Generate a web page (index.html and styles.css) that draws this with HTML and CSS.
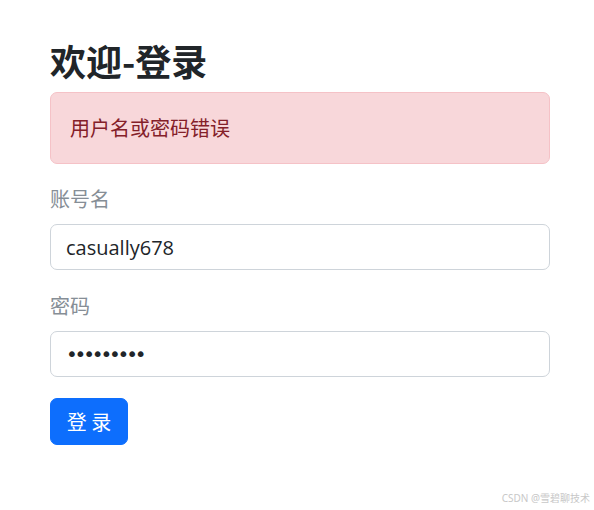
FILE: index.html
```html
<!DOCTYPE html>
<html lang="zh-CN">
<head>
<meta charset="utf-8">
<title>欢迎-登录</title>
<link rel="stylesheet" href="styles.css">
</head>
<body>
<div class="container">
  <h1 class="title">欢迎-登录</h1>
  <div class="alert">用户名或密码错误</div>
  <form class="form">
    <div class="field">
      <label class="label" for="u">账号名</label>
      <input class="control" id="u" type="text" value="casually678">
    </div>
    <div class="field">
      <label class="label" for="p">密码</label>
      <input class="control control-pass" id="p" type="password" value="123456789">
    </div>
    <button class="btn" type="button">登 录</button>
  </form>
</div>
<div class="watermark">CSDN @雪碧聊技术</div>
</body>
</html>
```

FILE: styles.css
```css
* { box-sizing: border-box; }
html, body { margin: 0; padding: 0; background: #fff; }
body {
  font-family: "Noto Sans", "Noto Sans CJK SC", sans-serif;
  color: #212529;
  font-size: 20px;
  line-height: 1.5;
  position: relative;
  height: 510px;
}
.container {
  width: 500px;
  margin-left: 50px;
  padding-top: 39px;
}
.title {
  margin: 0 0 10px;
  font-size: 36px;
  line-height: 43px;
  font-weight: 700;
  font-family: "Noto Sans CJK SC", sans-serif;
}
.alert {
  background: #f8d7da;
  border: 1px solid #f5c2c7;
  color: #842029;
  border-radius: 7px;
  padding: 20px 19px;
  line-height: 30px;
  margin-bottom: 20px;
  font-family: "Noto Sans CJK SC", sans-serif;
}
.form { display: flex; flex-direction: column; align-items: flex-start; }
.field { width: 100%; margin-bottom: 21px; display: flex; flex-direction: column; }
.label {
  color: #868e96;
  line-height: 30px;
  margin-bottom: 10px;
  font-family: "Noto Sans CJK SC", sans-serif;
}
.control {
  width: 100%;
  height: 46px;
  border: 1px solid #ced4da;
  border-radius: 7px;
  padding: 7px 15px;
  font-size: 20px;
  line-height: 30px;
  color: #212529;
  font-family: "Open Sans", "Noto Sans", sans-serif;
  background: #fff;
  outline: none;
}
.control-pass {
  font-family: "DejaVu Sans", sans-serif;
  font-size: 20px;
  letter-spacing: -3.2px;
}
.btn {
  height: 47px;
  width: 78px;
  padding: 0;
  border: 1px solid #0d6efd;
  background: #0d6efd;
  color: #fff;
  border-radius: 7px;
  font-size: 20px;
  font-family: "Noto Sans CJK SC", sans-serif;
  line-height: 30px;
}
.watermark {
  position: absolute;
  right: 4px;
  top: 490px;
  font-size: 10px;
  line-height: 16px;
  color: #c8c8c8;
  font-family: "Noto Sans", "Noto Sans CJK SC", sans-serif;
}
```
